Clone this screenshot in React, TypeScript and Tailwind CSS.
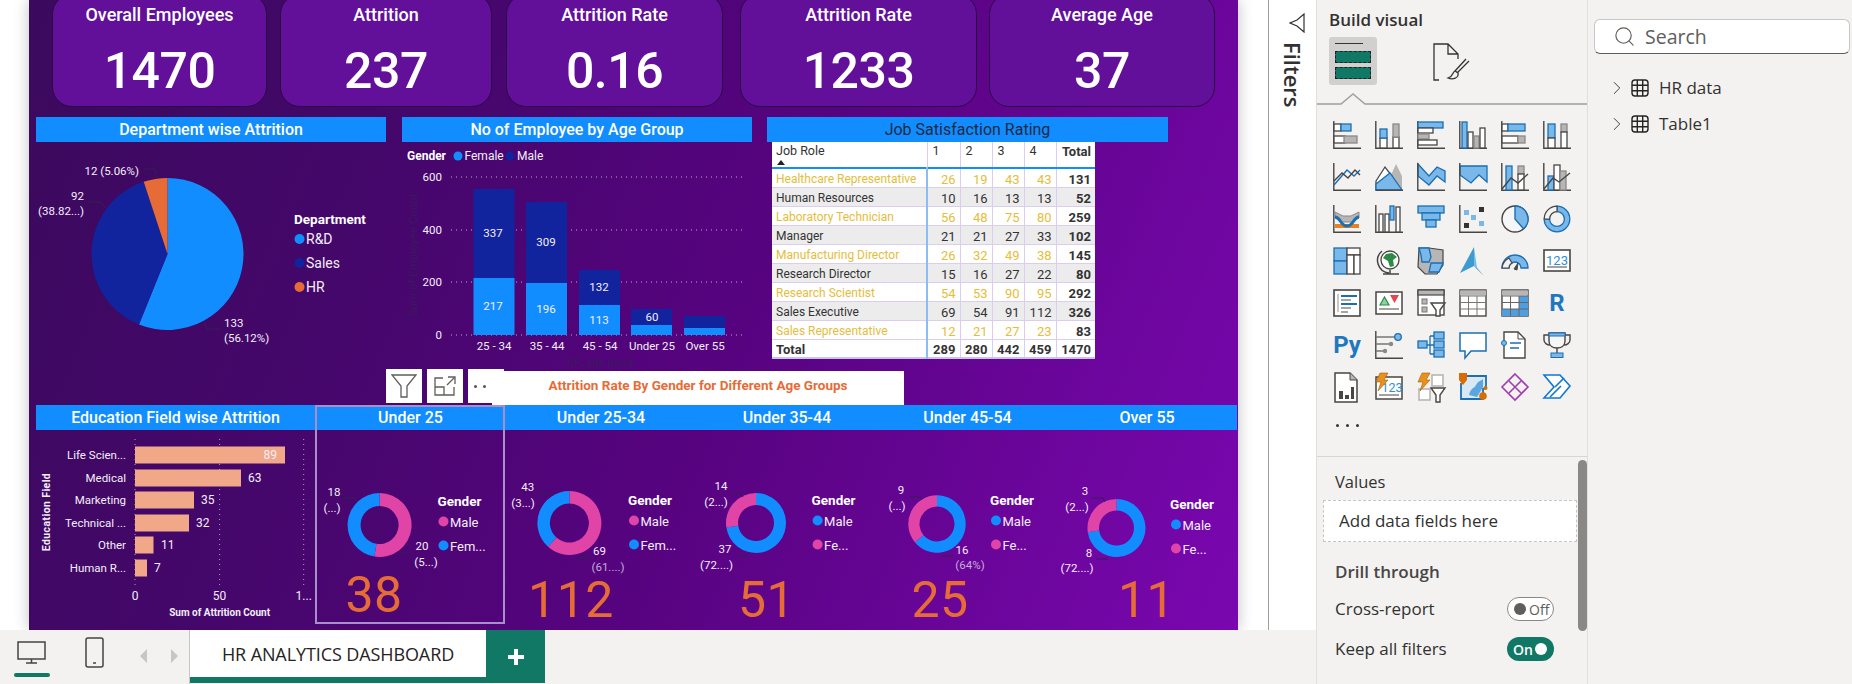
import type { ReactNode } from "react"
import { ChevronRight, Search } from "lucide-react"

const BLUE = "#118dff"
const NAVY = "#12239e"
const ORANGE = "#e66c37"
const PINK = "#e044a7"
const DK = "#484644"
const IC = "#1a6fb5"
const LB = "#7ab8ea"
const GR = "#b8b6b4"
const WH = "#ffffff"

const cards = [
  { title: "Overall Employees", value: "1470", w: "w-[215px]", ml: "ml-[23px]" },
  { title: "Attrition", value: "237", w: "w-[212px]", ml: "ml-[13px]" },
  { title: "Attrition Rate", value: "0.16", w: "w-[217px]", ml: "ml-[14px]" },
  { title: "Attrition Rate", value: "1233", w: "w-[237px]", ml: "ml-[17px]" },
  { title: "Average Age", value: "37", w: "w-[226px]", ml: "ml-[12px]" },
]

const jobRows = [
  ["Healthcare Representative", 26, 19, 43, 43, 131],
  ["Human Resources", 10, 16, 13, 13, 52],
  ["Laboratory Technician", 56, 48, 75, 80, 259],
  ["Manager", 21, 21, 27, 33, 102],
  ["Manufacturing Director", 26, 32, 49, 38, 145],
  ["Research Director", 15, 16, 27, 22, 80],
  ["Research Scientist", 54, 53, 90, 95, 292],
  ["Sales Executive", 69, 54, 91, 112, 326],
  ["Sales Representative", 12, 21, 27, 23, 83],
]

function slice(cx: number, cy: number, r: number, a0: number, a1: number, ir = 0) {
  const p = (rad: number, a: number) => `${cx + rad * Math.sin(a)} ${cy - rad * Math.cos(a)}`
  const large = a1 - a0 > Math.PI ? 1 : 0
  if (ir === 0) return `M${cx} ${cy}L${p(r, a0)}A${r} ${r} 0 ${large} 1 ${p(r, a1)}Z`
  return `M${p(r, a0)}A${r} ${r} 0 ${large} 1 ${p(r, a1)}L${p(ir, a1)}A${ir} ${ir} 0 ${large} 0 ${p(ir, a0)}Z`
}

function Slices({ cx, cy, r, ir = 0, parts }: { cx: number; cy: number; r: number; ir?: number; parts: [number, string][] }) {
  const total = parts.reduce((s, p) => s + p[0], 0)
  let acc = 0
  return (
    <>
      {parts.map(([v, c]) => {
        const a0 = (acc / total) * Math.PI * 2
        acc += v
        const a1 = (acc / total) * Math.PI * 2
        return <path key={c} d={slice(cx, cy, r, a0, a1, ir)} fill={c} />
      })}
    </>
  )
}

function T({ x, y, s = 11.5, a = "start", w = 400, c = "#f4eefa", children }: { x: number; y: number; s?: number; a?: "start" | "middle" | "end"; w?: number; c?: string; children: ReactNode }) {
  return (
    <text x={x} y={y} fontSize={s} textAnchor={a} fontWeight={w} fill={c} dominantBaseline="central">
      {children}
    </text>
  )
}

function Title({ children, dark }: { children: ReactNode; dark?: boolean }) {
  return (
    <div className={`h-[25px] bg-[#118dff] flex items-center justify-center text-[16px] leading-none font-['Roboto',sans-serif] ${dark ? "font-normal text-[#1f2a44]" : "font-medium text-white"}`}>
      {children}
    </div>
  )
}

function DeptPie() {
  return (
    <svg width={350} height={227} viewBox="36 142 350 227" className="block overflow-visible font-['Roboto',sans-serif]">
      <Slices cx={167.5} cy={254} r={76} parts={[[133, BLUE], [92, NAVY], [12, ORANGE]]} />
      <path d="M145 169H155L156 178M89 202H100L106 208M204 322L207 329H220" fill="none" stroke="#33204f" strokeWidth={1} />
      <T x={139} y={171} a="end">12 (5.06%)</T>
      <T x={84} y={196} a="end">92</T>
      <T x={84} y={211} a="end">(38.82...)</T>
      <T x={224} y={323}>133</T>
      <T x={224} y={338}>(56.12%)</T>
      <T x={294} y={219} s={13.5} w={700} c="#ffffff">Department</T>
      {([[239, "R&D", BLUE], [263, "Sales", NAVY], [287, "HR", ORANGE]] as [number, string, string][]).map(([y, l, c]) => (
        <g key={l}>
          <circle cx={299.5} cy={y} r={5} fill={c} />
          <T x={306} y={y} s={14}>{l}</T>
        </g>
      ))}
    </svg>
  )
}

function AgeChart() {
  const bars: [number, number, number][] = [
    [473.5, 278, 189],
    [526, 283, 202],
    [579, 305, 270],
    [631, 325, 309],
    [684, 328, 316],
  ]
  return (
    <svg width={350} height={227} viewBox="402 142 350 227" className="block overflow-visible font-['Roboto',sans-serif]">
      <T x={407} y={156} s={12} w={700} c="#ffffff">Gender</T>
      <circle cx={458} cy={156} r={4.5} fill={BLUE} />
      <T x={464.5} y={156} s={12}>Female</T>
      <circle cx={510} cy={156} r={4.5} fill={NAVY} />
      <T x={517} y={156} s={12}>Male</T>
      {([[177, "600"], [230, "400"], [282, "200"], [335, "0"]] as [number, string][]).map(([y, l]) => (
        <g key={l}>
          <line x1={451} x2={745} y1={y} y2={y} stroke="#ffffff" strokeOpacity={0.65} strokeDasharray="1 4" />
          <T x={442} y={y} a="end" s={11.5}>{l}</T>
        </g>
      ))}
      <text x={413} y={255} fontSize={11.5} fill="#3b1a5e" textAnchor="middle" dominantBaseline="central" transform="rotate(-90 413 255)">Sum of Employee Count</text>
      {bars.map(([x, f, m]) => (
        <g key={x}>
          <rect x={x} y={m} width={41} height={f - m} fill={NAVY} />
          <rect x={x} y={f} width={41} height={335 - f} fill={BLUE} />
        </g>
      ))}
      <T x={493} y={233} a="middle">337</T>
      <T x={493} y={306} a="middle">217</T>
      <T x={546} y={242} a="middle">309</T>
      <T x={546} y={309} a="middle">196</T>
      <T x={599} y={287} a="middle">132</T>
      <T x={599} y={320} a="middle">113</T>
      <T x={652} y={317} a="middle">60</T>
      <T x={494} y={346} a="middle">25 - 34</T>
      <T x={547} y={346} a="middle">35 - 44</T>
      <T x={600} y={346} a="middle">45 - 54</T>
      <T x={652} y={346} a="middle">Under 25</T>
      <T x={705} y={346} a="middle">Over 55</T>
      <T x={600} y={362} a="middle" c="#3b1a5e">CF_age band</T>
    </svg>
  )
}

function JobTable() {
  const td = "border-b border-r border-[#dccdf0] px-[4px] pt-[3px] text-right"
  return (
    <table className="ml-[5px] w-[323px] table-fixed border-collapse bg-white text-[13px] leading-none text-[#333] font-['Roboto',sans-serif]">
      <colgroup>
        <col className="w-[155px]" />
        <col className="w-[33px]" />
        <col className="w-[32px]" />
        <col className="w-[32px]" />
        <col className="w-[32px]" />
        <col className="w-[39px]" />
      </colgroup>
      <thead>
        <tr className="h-[26px] border-b-2 border-[#118dff] align-top">
          <th className="border-r border-[#dccdf0] px-[4px] pt-[3px] text-left text-[12.5px] font-normal">
            Job Role
            <div className="ml-[1px] mt-[2px] h-0 w-0 border-x-[4px] border-b-[5px] border-x-transparent border-b-[#222]" />
          </th>
          {[1, 2, 3, 4].map((n) => (
            <th key={n} className="border-r border-[#dccdf0] px-[5px] pt-[3px] text-left text-[12.5px] font-normal">{n}</th>
          ))}
          <th className="px-[4px] pt-[3px] text-right font-bold">Total</th>
        </tr>
      </thead>
      <tbody>
        {jobRows.map((row, i) => (
          <tr key={row[0]} className={`h-[19px] ${i % 2 ? "bg-[#ececec]" : "bg-white text-[#e6bd3a]"}`}>
            <td className="overflow-hidden whitespace-nowrap border-b border-r-2 border-b-[#dccdf0] border-r-[#8cbcf2] px-[4px] pt-[3px] text-left text-[12px]">{row[0]}</td>
            {row.slice(1, 5).map((v, j) => (
              <td key={j} className={td}>{v}</td>
            ))}
            <td className="border-b border-[#dccdf0] px-[4px] pt-[3px] text-right font-bold text-[#333]">{row[5]}</td>
          </tr>
        ))}
        <tr className="h-[19px] border-b-2 border-[#c9c4ee] font-bold">
          <td className="border-r-2 border-[#8cbcf2] px-[4px] pt-[2px] text-left">Total</td>
          {[289, 280, 442, 459].map((v) => (
            <td key={v} className="border-r border-[#dccdf0] px-[4px] pt-[2px] text-right">{v}</td>
          ))}
          <td className="px-[4px] pt-[2px] text-right">1470</td>
        </tr>
      </tbody>
    </table>
  )
}

function EduChart() {
  const rows: [number, string, number, string, number][] = [
    [455, "Life Scien...", 285, "89", 277],
    [478, "Medical", 241, "63", 248],
    [500, "Marketing", 194, "35", 201],
    [523, "Technical ...", 189, "32", 196],
    [545, "Other", 153.5, "11", 161],
    [568, "Human R...", 147, "7", 154],
  ]
  return (
    <svg width={279} height={200} viewBox="36 430 279 200" className="block overflow-visible font-['Roboto',sans-serif]">
      {[135, 219.6, 303.7].map((x) => (
        <line key={x} x1={x} x2={x} y1={439} y2={587} stroke="#ffffff" strokeOpacity={0.6} strokeDasharray="1 4" />
      ))}
      {rows.map(([y, l, r, v, vx]) => (
        <g key={l}>
          <T x={126} y={y} a="end" s={11.5}>{l}</T>
          <rect x={135} y={y - 8.5} width={r - 135} height={17} fill="#f0a888" />
          <T x={vx} y={y} s={12} a={v === "89" ? "end" : "start"}>{v}</T>
        </g>
      ))}
      <T x={135} y={596} a="middle" s={12}>0</T>
      <T x={219.6} y={596} a="middle" s={12}>50</T>
      <T x={303.7} y={596} a="middle" s={12}>1...</T>
      <T x={219.6} y={612} a="middle" s={10} w={700}>Sum of Attrition Count</T>
      <text x={46.5} y={512} fontSize={10.5} fontWeight={700} fill="#f4eefa" textAnchor="middle" dominantBaseline="central" letterSpacing={0.4} transform="rotate(-90 46.5 512)">Education Field</text>
    </svg>
  )
}

type Lab = [number, number, string, boolean?]
type DonutProps = {
  x0: number
  w: number
  cx: number
  cy: number
  r: number
  ir: number
  parts: [number, string][]
  labels: Lab[]
  lead: string
  lx: number
  ly: number
  legend: [string, string][]
  value: string
  vx: number
  vy: number
}

function Donut(p: DonutProps) {
  return (
    <svg width={p.w} height={200} viewBox={`${p.x0} 430 ${p.w} 200`} className="block overflow-visible font-['Roboto',sans-serif]">
      <Slices cx={p.cx} cy={p.cy} r={p.r} ir={p.ir} parts={p.parts} />
      <path d={p.lead} fill="none" stroke="#33204f" />
      {p.labels.map(([x, y, l, dim]) => (
        <T key={`${l}${y}`} x={x} y={y} a="middle" s={11.5} c={dim ? "#c4acd8" : "#f4eefa"}>{l}</T>
      ))}
      <T x={p.lx} y={p.ly} s={13.5} w={700} c="#ffffff">Gender</T>
      {p.legend.map(([l, c], i) => (
        <g key={l}>
          <circle cx={p.lx + 6} cy={p.ly + 20.5 + i * 24} r={5} fill={c} />
          <T x={p.lx + 12.5} y={p.ly + 21 + i * 24} s={13}>{l}</T>
        </g>
      ))}
      <text x={p.vx} y={p.vy} fontSize={50} textAnchor="middle" fill={ORANGE} dominantBaseline="central" letterSpacing={0.5}>{p.value}</text>
    </svg>
  )
}

function Ic({ children }: { children: ReactNode }) {
  return (
    <svg width={28} height={28} viewBox="0 0 28 28" fill="none" className="block overflow-visible font-['Roboto',sans-serif]">
      {children}
    </svg>
  )
}

const Axis = () => <path d="M.8 0V27.2H28" stroke={DK} strokeWidth={1.4} />
const R = ({ x, y, w, h, f = WH, s = DK }: { x: number; y: number; w: number; h: number; f?: string; s?: string }) => (
  <rect x={x} y={y} width={w} height={h} fill={f} stroke={s} strokeWidth={1.3} />
)

const icons: ReactNode[] = [
  <><Axis /><R x={1} y={3} w={7} h={7} /><R x={8} y={3} w={10} h={7} f={LB} s={IC} /><R x={1} y={15} w={11} h={7} /><R x={11} y={15} w={13} h={7} f={GR} s="#8a8886" /></>,
  <><Axis /><R x={5} y={17} w={7} h={10} /><R x={5} y={8} w={7} h={9} f={LB} s={IC} /><R x={18} y={16} w={6} h={11} /><R x={18} y={3} w={6} h={13} f={GR} s="#8a8886" /></>,
  <><Axis /><R x={1} y={1} w={25} h={6} f={LB} s={IC} /><R x={1} y={7} w={15} h={5} /><R x={1} y={13} w={11} h={5} f={GR} s="#8a8886" /><R x={1} y={19} w={19} h={5} /></>,
  <><Axis /><R x={3} y={1} w={5} h={26} f={LB} s={IC} /><R x={9} y={11} w={5} h={16} /><R x={15} y={15} w={5} h={12} f={GR} s="#8a8886" /><R x={21} y={7} w={5} h={20} /></>,
  <><Axis /><R x={1} y={3} w={6} h={7} /><R x={7} y={3} w={17} h={7} f={LB} s={IC} /><R x={1} y={15} w={16} h={7} /><R x={17} y={15} w={7} h={7} f={GR} s="#8a8886" /></>,
  <><Axis /><R x={5} y={3} w={7} h={14} f={LB} s={IC} /><R x={5} y={17} w={7} h={10} /><R x={18} y={3} w={6} h={8} f={GR} s="#8a8886" /><R x={18} y={11} w={6} h={16} /></>,

  <><Axis /><path d="M1 22L14 7L21 13L27 7" stroke={IC} strokeWidth={1.4} /><path d="M1 18L9 10L15 15L22 7L27 12" stroke={DK} strokeWidth={1.4} /></>,
  <><path d="M1 18L10 4L16 12L21 1L27 13V27H1Z" fill={GR} /><path d="M1 18L10 4L17 13L11 27H1Z" fill={WH} stroke={DK} strokeWidth={1.3} /><path d="M1 21L15 10L27 27H1Z" fill={LB} stroke={IC} strokeWidth={1.3} /><path d="M1 27.2H28" stroke={DK} strokeWidth={1.4} /></>,
  <><path d="M1 1L12 13L20 4L28 8V19L20 13L12 22L1 13Z" fill={LB} stroke={IC} strokeWidth={1.3} /><Axis /></>,
  <><path d="M1 3H28V19L20 12L12 20L1 12Z" fill={LB} stroke={IC} strokeWidth={1.3} /><Axis /></>,
  <><Axis /><R x={5} y={3} w={6} h={24} f={LB} s={IC} /><R x={17} y={3} w={6} h={8} f={GR} s="#8a8886" /><R x={17} y={11} w={6} h={16} /><path d="M1 26L10 15L17 20L27 11" stroke={DK} strokeWidth={1.4} /></>,
  <><Axis /><R x={5} y={13} w={6} h={14} f={LB} s={IC} /><R x={11} y={2} w={6} h={25} /><R x={17} y={8} w={6} h={19} f={GR} s="#8a8886" /><path d="M1 26L10 15L16 19L27 10" stroke={DK} strokeWidth={1.4} /></>,

  <><Axis /><path d="M2 7L10 11H18L26 7V13L18 17H10L2 13Z" fill={GR} stroke="#8a8886" /><path d="M2 19H26V23H2Z" fill="#e8821e" /><path d="M2 12C8 12 7 21 14 21S20 12 26 12" stroke={IC} strokeWidth={3} /></>,
  <><Axis /><R x={4} y={9} w={4} h={18} /><R x={10} y={9} w={4} h={18} /><R x={15} y={1} w={4} h={14} f={LB} s={IC} /><R x={21} y={2} w={4} h={25} /></>,
  <><R x={1} y={1} w={26} h={7} f={LB} s={IC} /><R x={5} y={8} w={18} h={7} f={LB} s={IC} /><R x={9} y={15} w={10} h={7} f={LB} s={IC} /></>,
  <><Axis /><rect x={5} y={5} width={5} height={5} fill={LB} /><rect x={12} y={10} width={5} height={5} fill={LB} /><rect x={20} y={16} width={5} height={5} fill={LB} /><rect x={20} y={2} width={5} height={5} fill="#333" /><rect x={5} y={18} width={5} height={5} fill="#333" /></>,
  <><circle cx={14} cy={14} r={13} fill="#f6f6f6" stroke={DK} strokeWidth={1.4} /><path d="M14 1A13 13 0 0 1 22.5 23.8L14 14Z" fill={LB} stroke={IC} strokeWidth={1.4} /></>,
  <><circle cx={14} cy={14} r={10.5} stroke={LB} strokeWidth={5} /><path d="M14 1.2A12.8 12.8 0 0 1 26.8 14A12.8 12.8 0 0 1 1.2 14H6.6A7.4 7.4 0 0 0 21.4 14A7.4 7.4 0 0 0 14 6.6Z" stroke={IC} strokeWidth={1.3} fill={LB} /><path d="M1.2 14A12.8 12.8 0 0 1 14 1.2V6.6A7.4 7.4 0 0 0 6.6 14Z" fill="#f3f2f1" stroke={DK} strokeWidth={1.2} /></>,

  <><R x={1} y={1} w={13} h={13} f={LB} s={IC} /><R x={1} y={14} w={13} h={13} f={LB} s={IC} /><R x={14} y={1} w={13} h={7} /><R x={14} y={8} w={7} h={19} /><R x={21} y={8} w={6} h={19} /></>,
  <><circle cx={15} cy={13} r={9} fill={WH} stroke={DK} strokeWidth={1.3} /><path d="M11 7L17 6L22 10L18 13L19 19L15 20L13 14L8 11Z" fill="#2e8b47" /><path d="M7 4A12.5 12.5 0 0 0 14 26M8 27H24M15 23V27" stroke={DK} strokeWidth={1.5} /></>,
  <><path d="M2 1H12L26 3V18L20 27L8 27L1 20Z" fill={GR} stroke={DK} strokeWidth={1.2} /><path d="M2 1H12L14 10L12 15H5L4 8Z" fill={LB} stroke={IC} strokeWidth={1.3} /><path d="M14 16H26L22 25H12Z" fill={LB} stroke={IC} strokeWidth={1.3} /></>,
  <><path d="M15 0L1 26L15 19Z" fill="#3d9bd0" /><path d="M15 0L18 21L15 19Z" fill="#74bfe8" /><path d="M15 19L25 29L18 21Z" fill="#0f6cbd" /></>,
  <><path d="M1 21A13 13 0 0 1 27 21H20A6 6 0 0 0 8 21Z" fill={LB} stroke={IC} strokeWidth={1.3} /><path d="M1 21A13 13 0 0 1 8 11L11 16A6 6 0 0 0 8 21Z" fill="#f3f2f1" stroke={DK} strokeWidth={1.2} /><path d="M13 22L17 16L16 23Z" fill={DK} stroke={DK} /></>,
  <><rect x={1} y={3} width={26} height={21} fill={WH} stroke={DK} strokeWidth={1.6} /><text x={14} y={13} fontSize={13} fill="#2e8fd8" textAnchor="middle" dominantBaseline="central">123</text><path d="M4 20H24" stroke={DK} /></>,

  <><rect x={1} y={1} width={26} height={26} fill={WH} stroke={DK} strokeWidth={1.6} /><path d="M5 5V23" stroke={GR} strokeWidth={1.5} /><path d="M8 7H24M8 15H24" stroke={IC} strokeWidth={2.2} /><path d="M8 11H18M8 19H18M8 23H15" stroke="#888" strokeWidth={1.3} /></>,
  <><rect x={1} y={3} width={26} height={22} fill={WH} stroke={DK} strokeWidth={1.5} /><path d="M5 16L9.5 8L14 16Z" fill="#8fd1a0" stroke="#2e8b47" strokeWidth={1.2} /><path d="M15 6H24L19.5 14Z" fill="#e8434e" /><path d="M4 20H24" stroke={DK} /></>,
  <><rect x={1} y={1} width={26} height={25} fill={WH} stroke={DK} strokeWidth={1.4} /><rect x={1} y={1} width={26} height={5} fill={GR} stroke={DK} strokeWidth={1.2} /><rect x={5} y={10} width={5} height={5} fill={GR} stroke="#777" /><rect x={5} y={18} width={5} height={5} fill={GR} stroke="#777" /><path d="M14 14H28L23 21V27H19V21Z" fill={WH} stroke={DK} strokeWidth={1.4} /></>,
  <><rect x={1} y={1} width={26} height={26} fill={WH} stroke={DK} strokeWidth={1.4} /><path d="M1 4H27" stroke={GR} strokeWidth={5} /><path d="M1 7H27M1 13.5H27M1 20H27M9.5 7V27M18 7V27" stroke="#777" /></>,
  <><rect x={1} y={1} width={26} height={26} fill={WH} stroke={DK} strokeWidth={1.4} /><path d="M1 4H27" stroke={GR} strokeWidth={5} /><rect x={18} y={7} width={9} height={20} fill="#4f9fe0" /><rect x={1} y={20} width={26} height={7} fill="#4f9fe0" /><path d="M1 7H27M1 13.5H27M1 20H27M9.5 7V27M18 7V27" stroke="#666" /></>,
  <text x={14} y={14} fontSize={24} fontWeight={700} fill="#1f78bd" textAnchor="middle" dominantBaseline="central">R</text>,

  <text x={14} y={14} fontSize={24} fontWeight={700} fill="#1f78bd" textAnchor="middle" dominantBaseline="central">Py</text>,
  <><Axis /><path d="M1 6H22M1 13H15M1 20H10" stroke="#777" strokeWidth={1.3} /><circle cx={23} cy={6} r={3.3} fill={LB} stroke={IC} strokeWidth={1.3} /><circle cx={16} cy={13} r={2.2} fill="#888" /><circle cx={10} cy={20} r={2.2} fill="#888" /></>,
  <><path d="M8 14H13M13 5V23M13 5H17M13 14H17M13 23H17" stroke={IC} strokeWidth={1.3} /><R x={1} y={10} w={9} h={7} f={LB} s={IC} /><R x={17} y={1} w={10} h={7} f={LB} s={IC} /><R x={17} y={10} w={10} h={7} f={LB} s={IC} /><R x={17} y={19} w={10} h={7} f={LB} s={IC} /></>,
  <path d="M1 2H27V20H12L6 27V20H1Z" fill={WH} stroke={IC} strokeWidth={1.5} />,
  <><path d="M3 1H17L24 8V27H3Z" fill={WH} stroke={DK} strokeWidth={1.4} /><path d="M17 1V8H24" stroke={DK} /><circle cx={3} cy={12} r={2.5} fill={LB} stroke={IC} /><path d="M9 12H20M9 17H18" stroke={IC} strokeWidth={1.3} /></>,
  <><path d="M6 2H22V10C22 15 18 17 14 17S6 15 6 10Z" fill="#f6f6f6" stroke={DK} strokeWidth={1.4} /><path d="M6 4H1V9C1 12 4 14 7 14M22 4H27V9C27 12 24 14 21 14M14 17V22" stroke={DK} strokeWidth={1.4} /><rect x={6} y={2} width={16} height={3} fill={LB} stroke={IC} /><rect x={8} y={22} width={12} height={4.5} fill={LB} stroke={IC} /></>,

  <><path d="M2 0H17L24 7V29H2Z" fill={WH} stroke={DK} strokeWidth={1.5} /><path d="M17 0V7H24" fill={GR} stroke={DK} /><path d="M6 18H10V26H6ZM12 22H16V26H12ZM18 14H21V26H18Z" fill={DK} /></>,
  <><rect x={1} y={4} width={26} height={22} fill={WH} stroke={DK} strokeWidth={1.5} /><text x={17} y={14} fontSize={12.5} fill="#2e8fd8" textAnchor="middle" dominantBaseline="central">123</text><path d="M4 22H24" stroke={DK} /><path d="M5 0H13L9 7H13L3 18L6 9H1Z" fill="#e8921e" stroke="#a85f00" strokeWidth={0.6} /></>,
  <><rect x={15} y={2} width={11} height={11} fill={WH} stroke={GR} strokeWidth={1.6} /><rect x={2} y={16} width={11} height={11} fill={WH} stroke={GR} strokeWidth={1.6} /><path d="M14 15H28L23 22V29H19V22Z" fill={WH} stroke={DK} strokeWidth={1.4} /><path d="M5 0H13L9 7H13L3 18L6 9H1Z" fill="#e8921e" stroke="#a85f00" strokeWidth={0.6} /></>,
  <><path d="M5 3H27V15L24 16V26H2V10" fill="#d8e8f5" stroke={IC} strokeWidth={1.8} /><path d="M10 22C12 14 15 16 17 12S22 8 24 6V14L18 24Z" fill="#5ba6e0" /><path d="M0 0H8V7L4 12L0 7Z" fill="#d86c00" /><circle cx={24} cy={23} r={3.8} fill="#d86c00" /><circle cx={26.5} cy={15} r={2} fill="#d86c00" /></>,
  <><path d="M14 1L27 14L14 27L1 14Z" fill="none" stroke="#a33cb0" strokeWidth={1.6} /><path d="M8 8L20 20M20 8L8 20" stroke="#a33cb0" strokeWidth={1.6} /></>,
  <><path d="M1 2H17L27 13L17 25H1L11 14Z" fill={WH} stroke="#0f78d4" strokeWidth={1.6} /><path d="M12 14L21 5M7 24L18 13" stroke="#0f78d4" strokeWidth={1.6} /></>,
]

function Toggle({ on }: { on: boolean }) {
  if (on) {
    return (
      <div className="flex h-[24px] w-[47px] items-center justify-between rounded-full bg-[#117865] pl-[6px] pr-[7px] text-[14px] font-semibold text-white">
        On<span className="h-[12px] w-[12px] rounded-full bg-white" />
      </div>
    )
  }
  return (
    <div className="flex h-[24px] w-[47px] items-center gap-[3px] rounded-full border border-[#8a8886] bg-white pl-[6px] text-[14px] text-[#605e5c]">
      <span className="h-[12px] w-[12px] rounded-full bg-[#605e5c]" />Off
    </div>
  )
}

function TableIcon() {
  return (
    <svg width={18} height={18} viewBox="0 0 18 18" fill="none" stroke="#252423" strokeWidth={1.4} className="shrink-0">
      <rect x={1} y={1} width={16} height={16} rx={3} />
      <path d="M1 6.3H17M1 11.7H17M6.3 1V17M11.7 1V17" />
    </svg>
  )
}

export default function App() {
  return (
    <div className="flex h-[684px] w-[1852px] overflow-hidden bg-[#f3f2f1] font-['Open_Sans',sans-serif] text-[#323130]">
      <div className="flex w-[1316px] flex-col">
        <div className="flex h-[630px] bg-white">
          <div className="ml-[29px] h-[630px] w-[1209px] overflow-hidden bg-[linear-gradient(112deg,#3b0a5d_0%,#44076a_28%,#570380_58%,#7a07b0_100%)] shadow-[0_0_14px_rgba(0,0,0,0.25)]">
            <div className="flex h-[107px] items-end">
              {cards.map((c) => (
                <div key={c.value} className={`flex h-[113px] shrink-0 flex-col items-center rounded-[20px] border border-[#2a0a45] bg-[#62109a] pt-[8px] font-['Roboto',sans-serif] text-white ${c.w} ${c.ml}`}>
                  <div className="text-[18px] font-medium leading-[24px]">{c.title}</div>
                  <div className="mt-[16px] text-[50px] font-medium leading-[56px] tracking-[-0.5px]">{c.value}</div>
                </div>
              ))}
            </div>

            <div className="ml-[7px] mt-[10px] flex h-[252px] gap-[16px]">
              <div className="w-[350px]">
                <Title>Department wise Attrition</Title>
                <DeptPie />
              </div>
              <div className="w-[350px]">
                <Title>No of Employee by Age Group</Title>
                <AgeChart />
              </div>
              <div className="-ml-px w-[401px]">
                <Title dark>Job Satisfaction Rating</Title>
                <JobTable />
              </div>
            </div>

            <div className="flex h-[36px] pl-[357px]">
              <div className="flex h-[34px] w-[36px] items-center justify-center bg-white">
                <svg width={26} height={24} viewBox="0 0 26 24" fill="none" stroke="#605e5c" strokeWidth={1.3}>
                  <path d="M1 1H25L16 12V23H10V12Z" />
                </svg>
              </div>
              <div className="ml-[5px] flex h-[34px] w-[36px] items-center justify-center bg-white">
                <svg width={22} height={20} viewBox="0 0 22 20" fill="none" stroke="#605e5c" strokeWidth={1.3}>
                  <path d="M9 2H1V19H20V11M1 11H10V19M13 9L20 2M14 1H21V8" />
                </svg>
              </div>
              <div className="ml-[5px] flex h-[34px] w-[36px] items-center gap-[6px] bg-white pl-[6px]">
                <span className="h-[3px] w-[3px] rounded-full bg-[#555]" />
                <span className="h-[3px] w-[3px] rounded-full bg-[#555]" />
              </div>
              <div className="-ml-[12px] mt-[2px] flex h-[34px] w-[412px] justify-center bg-white pt-[6px] font-['Roboto',sans-serif] text-[13.5px] font-bold leading-[16px] text-[#e66c37]">
                Attrition Rate By Gender for Different Age Groups
              </div>
            </div>

            <div className="relative ml-[7px] flex">
              <div className="w-[279px]">
                <Title>Education Field wise Attrition</Title>
                <EduChart />
              </div>
              <div className="w-[191px]">
                <Title>Under 25</Title>
                <Donut x0={315} w={191} cx={379.6} cy={525} r={32} ir={19} parts={[[20, PINK], [18, BLUE]]}
                  labels={[[334, 492, "18"], [332, 508, "(...)"], [422, 546, "20"], [426, 562, "(5...)"]]}
                  lead="M343 498H354L357 501M400 553L404 553H412" lx={437.5} ly={501} legend={[["Male", PINK], ["Fem...", BLUE]]} value="38" vx={374} vy={595} />
              </div>
              <div className="w-[190px]">
                <Title>Under 25-34</Title>
                <Donut x0={506} w={190} cx={569.4} cy={523} r={32} ir={19.5} parts={[[69, PINK], [43, BLUE]]}
                  labels={[[527.7, 487, "43"], [523, 503, "(3...)"], [599.5, 551, "69"], [608, 567, "(61....)", true]]}
                  lead="M538 493H550L552 496M578 558H590" lx={628} ly={500} legend={[["Male", PINK], ["Fem...", BLUE]]} value="112" vx={571} vy={600} />
              </div>
              <div className="w-[182px]">
                <Title>Under 35-44</Title>
                <Donut x0={696} w={182} cx={756} cy={523} r={30} ir={18} parts={[[37, BLUE], [14, PINK]]}
                  labels={[[721, 486, "14"], [716, 502, "(2...)"], [725, 549, "37"], [716.5, 565, "(72....)"]]}
                  lead="M731 493H741L743 497M738 556H746L748 553" lx={811.6} ly={500} legend={[["Male", BLUE], ["Fe...", PINK]]} value="51" vx={766.5} vy={600} />
              </div>
              <div className="w-[179px]">
                <Title>Under 45-54</Title>
                <Donut x0={878} w={179} cx={937} cy={524} r={28.7} ir={17.5} parts={[[16, BLUE], [9, PINK]]}
                  labels={[[901, 490, "9"], [897, 506, "(...)"], [962, 550, "16"], [970, 565, "(64%)", true]]}
                  lead="M909 497H920L922 500M941 556H953" lx={990} ly={500} legend={[["Male", BLUE], ["Fe...", PINK]]} value="25" vx={940} vy={600} />
              </div>
              <div className="w-[180px]">
                <Title>Over 55</Title>
                <Donut x0={1057} w={180} cx={1116.5} cy={528} r={29} ir={17.5} parts={[[8, BLUE], [3, PINK]]}
                  labels={[[1085, 491, "3"], [1077, 507, "(2...)"], [1089, 553, "8"], [1077, 568, "(72....)"]]}
                  lead="M1092 498H1103L1105 502M1096 559H1108" lx={1170} ly={504} legend={[["Male", BLUE], ["Fe...", PINK]]} value="11" vx={1146.5} vy={600} />
              </div>
              <div className="absolute left-[279px] top-0 h-[219px] w-[190px] border-2 border-[#a98fc9]" />
            </div>
          </div>
          <div className="ml-[30px] flex w-[48px] flex-col items-center border-l border-[#a19f9d] bg-white">
            <svg width={16} height={20} viewBox="0 0 16 20" fill="none" stroke="#323130" strokeWidth={1.2} className="mt-[13px] ml-[8px]">
              <path d="M15 1V19L8 13L1 10L8 7Z" />
            </svg>
            <div className="mt-[9px] text-[22px] font-semibold leading-[26px] [writing-mode:vertical-rl]">Filters</div>
          </div>
        </div>

        <div className="flex h-[54px] bg-[#f3f2f1]">
          <div className="relative w-[190px] border-r border-[#c8c6c4]">
            <div className="flex h-full items-start gap-[39px] pl-[17px]">
              <svg width={29} height={23} viewBox="0 0 29 23" fill="none" stroke="#444" strokeWidth={1.5} className="mt-[11px] shrink-0">
                <rect x={1} y={1} width={27} height={17} />
                <path d="M14.5 18V22M9 22H20" />
              </svg>
              <svg width={19} height={31} viewBox="0 0 19 31" fill="none" stroke="#444" strokeWidth={1.5} className="mt-[7px] shrink-0">
                <rect x={1} y={1} width={17} height={29} rx={2} />
                <path d="M8 26H11" />
              </svg>
            </div>
            <div className="absolute left-[14px] top-[43px] h-[4px] w-[36px] rounded-full bg-[#117865]" />
            <svg width={44} height={16} viewBox="0 0 44 16" fill="#c8c6c4" className="absolute left-[138px] top-[19px]">
              <path d="M9 0V14L2 7ZM33 0V14L40 7Z" />
            </svg>
          </div>
          <div className="flex h-[53px] w-[296px] items-center justify-center border-b-[6px] border-[#117865] bg-white pt-[2px] text-[18px] tracking-[-0.1px] text-[#252423]">
            HR ANALYTICS DASHBOARD
          </div>
          <div className="flex h-[53px] w-[59px] items-center justify-center bg-[#117865]">
            <svg width={18} height={18} viewBox="0 0 18 18" fill="#fff"><path d="M7 1H11V7H17V11H11V17H7V11H1V7H7Z" /></svg>
          </div>
        </div>
      </div>

      <div className="relative flex w-[272px] flex-col border-x border-[#e1dfdd]">
        <div className="pl-[12px] pt-[9px] text-[17px] font-semibold leading-[22px]">Build visual</div>
        <div className="ml-[12px] mt-[6px] flex">
          <div className="flex h-[48px] w-[48px] flex-col gap-[4px] rounded-[3px] bg-[#d2d0ce] px-[6px] pt-[6px]">
            <div className="h-px w-[28px] bg-[#333]" />
            <div className="mt-[3px] h-[12px] w-[36px] border border-dashed border-[#222] bg-[#117865]" />
            <div className="h-[12px] w-[36px] border border-dashed border-[#222] bg-[#117865]" />
          </div>
          <svg width={38} height={38} viewBox="0 0 38 38" fill="none" stroke="#333" strokeWidth={1.3} className="ml-[56px] mt-[6px]">
            <path d="M6 37H1V1H15L25 11V16M15 1V11H25" />
            <path d="M36 18L24 30M33 16L22 28" />
            <path d="M22 28C19 29 21 33 15 35C20 37 26 35 25 30Z" fill="#f3f2f1" />
          </svg>
        </div>
        <svg width={270} height={12} viewBox="0 0 270 12" fill="none" stroke="#a19f9d" strokeWidth={1.4} className="mt-[8px] shrink-0">
          <path d="M0 11H24L36 1L48 11H270" />
        </svg>
        <div className="ml-[16px] mt-[16px] grid grid-cols-[repeat(6,28px)] gap-x-[14px] gap-y-[14px]">
          {icons.map((ic, i) => (
            <Ic key={i}>{ic}</Ic>
          ))}
        </div>
        <div className="ml-[19px] mt-[23px] flex h-[4px] gap-[7px]">
          <span className="h-[3px] w-[3px] rounded-full bg-[#333]" />
          <span className="h-[3px] w-[3px] rounded-full bg-[#333]" />
          <span className="h-[3px] w-[3px] rounded-full bg-[#333]" />
        </div>
        <div className="mt-[28px] flex-1 border-t border-[#d8d6d4] pt-[14px]">
          <div className="pl-[18px] text-[16.5px] leading-[22px]">Values</div>
          <div className="ml-[6px] mt-[7px] flex h-[42px] w-[254px] items-center border border-dashed border-[#c8c6c4] bg-white pl-[15px] text-[17px]">Add data fields here</div>
          <div className="mt-[19px] pl-[18px] text-[17px] font-semibold leading-[22px] text-[#484644]">Drill through</div>
          <div className="mt-[14px] flex h-[24px] items-center justify-between pl-[18px] pr-[33px] text-[17px]">
            Cross-report<Toggle on={false} />
          </div>
          <div className="mt-[16px] flex h-[24px] items-center justify-between pl-[18px] pr-[33px] text-[17px]">
            Keep all filters<Toggle on />
          </div>
        </div>
        <div className="absolute left-[261px] top-[460px] h-[171px] w-[9px] rounded-full bg-[#8a8886]" />
      </div>

      <div className="flex-1 pl-[6px] pr-[2px] pt-[19px]">
        <div className="flex h-[35px] items-center rounded-[6px] border border-[#c8c6c4] border-b-[#605e5c] bg-white pb-[1px] pl-[18px] text-[19.5px] text-[#605e5c]">
          <Search size={23} strokeWidth={1.2} className="mr-[9px]" />
          <span className="pt-[2px]">Search</span>
        </div>
        {["HR data", "Table1"].map((n, i) => (
          <div key={n} className={`flex h-[20px] items-center pl-[12px] text-[17px] ${i ? "mt-[16px]" : "mt-[24px]"}`}>
            <ChevronRight size={22} strokeWidth={1} className="mr-[3px] shrink-0" />
            <TableIcon />
            <span className="ml-[10px]">{n}</span>
          </div>
        ))}
      </div>
    </div>
  )
}
